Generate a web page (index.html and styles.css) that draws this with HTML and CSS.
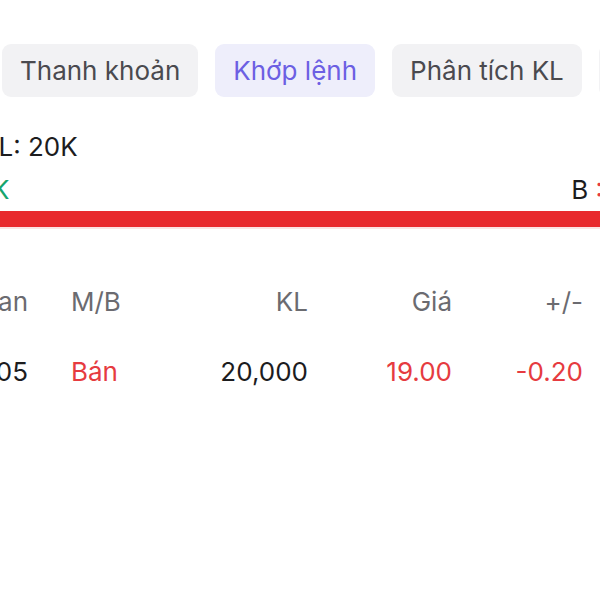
FILE: index.html
```html
<!DOCTYPE html>
<html lang="vi">
<head>
    <meta charset="UTF-8">
    <meta name="viewport" content="width=device-width, initial-scale=1.0">
    <title>Khớp lệnh</title>
    <link rel="stylesheet" href="styles.css">
</head>
<body>

<div class="screen">
    <!-- Tabs -->
    <div class="tabs">
        <div class="tab">Thanh khoản</div>
        <div class="tab active">Khớp lệnh</div>
        <div class="tab">Phân tích KL</div>
        <div class="tab">Biểu đồ</div>
    </div>

    <!-- Tổng khối lượng -->
    <div class="summary">Tổng KL: 20K</div>

    <div class="ratio">
        <span>M <span class="up">: 0K</span></span>
        <span>B <span class="down">: 20K</span></span>
    </div>
    <div class="bar"></div>

    <!-- Bảng khớp lệnh -->
    <div class="table">
        <div class="row head">
            <div class="c-time">Thời gian</div>
            <div class="c-side">M/B</div>
            <div class="c-num">KL</div>
            <div class="c-num">Giá</div>
            <div class="c-num">+/-</div>
        </div>
        <div class="row">
            <div class="c-time">14:45:05</div>
            <div class="c-side down">Bán</div>
            <div class="c-num">20,000</div>
            <div class="c-num down">19.00</div>
            <div class="c-num down">-0.20</div>
        </div>
    </div>
</div>

</body>
</html>
```

FILE: styles.css
```css
body {
    margin: 0;
    background-color: #ffffff;
    font-family: Inter, "Noto Sans", sans-serif;
    color: #1c1c1e;
    overflow: hidden;
}
.screen {
    width: 600px;
    height: 600px;
    overflow: hidden;
}
.tabs {
    display: flex;
    gap: 17px;
    margin-top: 44px;
    margin-left: 2px;
    white-space: nowrap;
}
.tab {
    flex: none;
    height: 53px;
    padding: 0 18px;
    display: flex;
    align-items: center;
    background-color: #f2f2f4;
    color: #4a4a4f;
    font-size: 26px;
    border-radius: 9px;
}
.tab.active {
    background-color: #eeeefb;
    color: #6c5fe3;
}
.summary {
    margin-top: 34px;
    margin-left: -88px;
    font-size: 26px;
    line-height: 32px;
    white-space: nowrap;
}
.ratio {
    display: flex;
    justify-content: space-between;
    margin-top: 12px;
    margin-left: -70px;
    margin-right: -60px;
    font-size: 26px;
    line-height: 30px;
    white-space: nowrap;
}
.bar {
    height: 16px;
    margin-top: 6px;
    background-color: #e8292d;
    box-shadow: 0 2px 0 #fbe3e3;
}
.up {
    color: #16a56e;
}
.down {
    color: #e63b40;
}
.table {
    margin-top: 55px;
    margin-left: -100px;
}
.row {
    display: grid;
    grid-template-columns: 128px 79px 115px 101px 88px;
    column-gap: 43px;
    font-size: 26px;
    line-height: 40px;
    white-space: nowrap;
}
.row + .row {
    margin-top: 30px;
}
.head {
    color: #6b6b70;
}
.c-time {
    text-align: right;
}
.c-num {
    text-align: right;
}
```
